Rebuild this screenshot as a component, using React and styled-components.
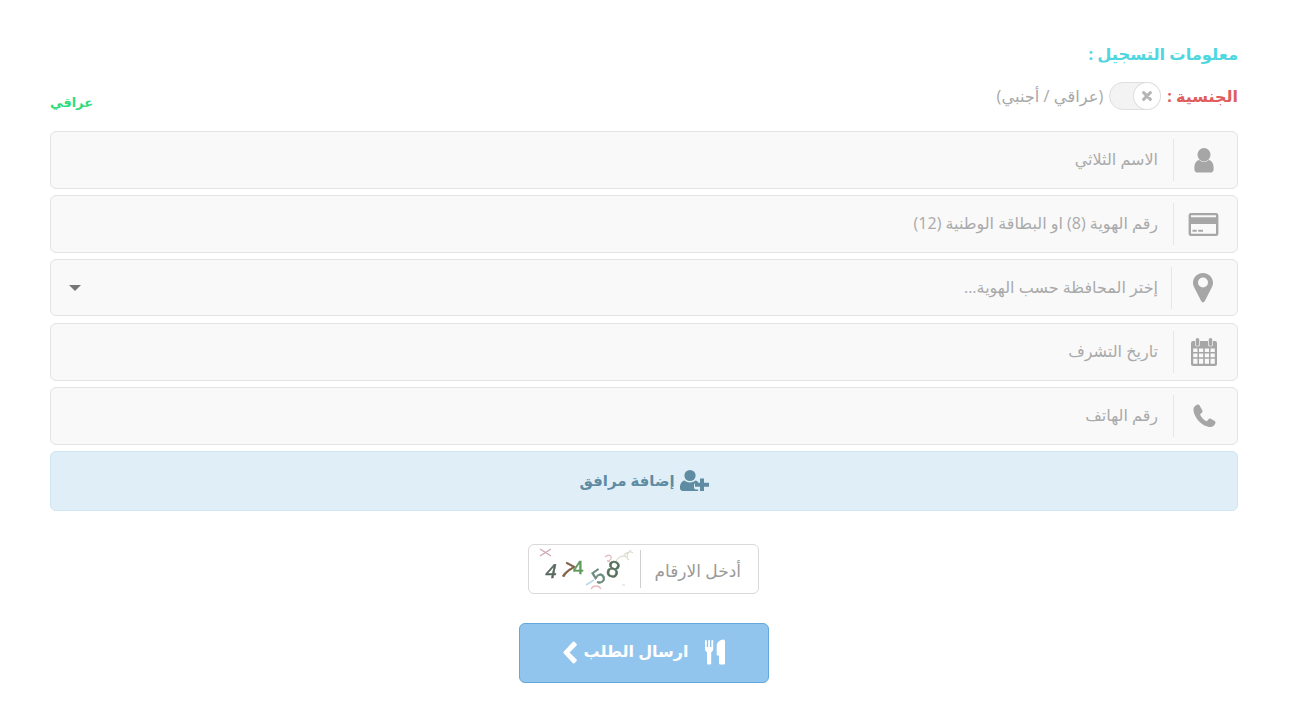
import React from 'react';
import styled, { createGlobalStyle } from 'styled-components';

const GlobalStyle = createGlobalStyle`
  html, body { margin: 0; padding: 0; background: #fff; }
  body { font-family: "Open Sans", "DejaVu Sans", "Noto Sans", sans-serif; }
`;

const Page = styled.div`
  direction: rtl;
  width: 1188px;
  margin-left: 50px;
  padding-top: 44px;
  padding-bottom: 32px;
`;

const Heading = styled.div`
  color: #4fd6de;
  font-size: 16.3px;
  font-weight: bold;
  line-height: 20px;
`;

const NationalityRow = styled.div`
  display: flex;
  align-items: center;
  justify-content: space-between;
  height: 28px;
  margin-top: 18px;
  margin-bottom: 21px;
`;

const NationalityLeft = styled.div`
  display: flex;
  align-items: center;
`;

const NationalityLabel = styled.span`
  color: #e05d5d;
  font-size: 16px;
  font-weight: bold;
  margin-left: 6px;
`;

const Toggle = styled.div`
  width: 52px;
  height: 28px;
  box-sizing: border-box;
  border: 1px solid #dfdfdf;
  border-radius: 14px;
  background: #f3f3f3;
  margin-left: 6px;
  display: flex;
`;

const Knob = styled.div`
  width: 26px;
  height: 26px;
  border-radius: 50%;
  background: #fff;
  box-shadow: 0 0 0 1px #dfdfdf;
  display: flex;
  align-items: center;
  justify-content: center;
`;

const Hint = styled.span`
  color: #a9a9a9;
  font-size: 16.3px;
`;

const Status = styled.span`
  color: #2fdc7c;
  font-size: 13px;
  font-weight: bold;
  position: relative;
  top: 6px;
`;

const Fields = styled.div`
  display: flex;
  flex-direction: column;
  gap: 6px;
`;

const Field = styled.div`
  display: flex;
  align-items: center;
  height: ${p => p.$h || 58}px;
  margin-bottom: ${p => (p.$h ? 1 : 0)}px;
  box-sizing: border-box;
  border: 1px solid #e3e3e3;
  border-radius: 6px;
  background: #f9f9f9;
`;

const IconCell = styled.div`
  width: ${p => p.$w || 64}px;
  height: 42px;
  flex: none;
  box-sizing: border-box;
  padding-right: 4px;
  border-left: 1px solid #e6e6e6;
  display: flex;
  align-items: center;
  justify-content: center;
  color: #a6a6a6;
`;

const Placeholder = styled.div`
  flex: 1;
  color: #aaa;
  font-size: 16px;
  padding-right: ${p => p.$pad || 15}px;
  margin-bottom: 2px;
`;

const Caret = styled.div`
  width: 0;
  height: 0;
  margin-left: 18px;
  border-left: 6px solid transparent;
  border-right: 6px solid transparent;
  border-top: 6px solid #777;
`;

const AddButton = styled.div`
  height: 60px;
  box-sizing: border-box;
  border: 1px solid #cfe5f2;
  border-radius: 6px;
  background: #e0eff7;
  color: #5f8ba3;
  font-size: 15px;
  font-weight: bold;
  display: flex;
  align-items: center;
  justify-content: center;
  gap: 5px;
`;

const AddLabel = styled.span`
  margin-bottom: 2px;
`;

const Captcha = styled.div`
  width: 231px;
  height: 50px;
  box-sizing: border-box;
  margin: 33px 479px 0 0;
  border: 1px solid #d9d9d9;
  border-radius: 6px;
  display: flex;
  align-items: center;
`;

const CaptchaLabel = styled.div`
  width: 118px;
  height: 38px;
  flex: none;
  box-sizing: border-box;
  border-left: 1px solid #cfcfcf;
  color: #999;
  font-size: 17px;
  display: flex;
  align-items: center;
  padding-right: 17px;
  padding-top: 2px;
`;

const Submit = styled.div`
  width: 250px;
  height: 60px;
  box-sizing: border-box;
  margin: 29px auto 0;
  padding-bottom: 2px;
  border: 1px solid #62a8dc;
  border-radius: 6px;
  background: #92c5ee;
  color: #fff;
  font-size: 16px;
  font-weight: bold;
  display: flex;
  align-items: center;
  justify-content: center;
  gap: 5px;
`;

const SubmitLabel = styled.span`
  margin-right: 11px;
  margin-bottom: 2px;
`;

const Svg = ({ w, h, vb, children }) => (
  <svg width={w} height={h} viewBox={vb} fill="currentColor" style={{ display: 'block' }}>{children}</svg>
);

const UserIcon = () => (
  <Svg w={22} h={25} vb="0 0 22 26">
    <ellipse cx="11" cy="7" rx="6.800" ry="7" />
    <path d="M1 20.500C1 15.500 3.500 12.800 6 12.500c1.400 1.300 3 2 5 2s3.600-.7 5-2c2.500.3 5 3 5 8v1.500c0 2.200-1.600 3.500-3.500 3.500h-13C2.600 25.500 1 24.200 1 22z" />
  </Svg>
);

const CardIcon = () => (
  <Svg w={31} h={25} vb="0 0 32 26">
    <path fillRule="evenodd" d="M3 1h26a2.500 2.500 0 0 1 2.500 2.500v19a2.500 2.500 0 0 1-2.500 2.500H3a2.500 2.500 0 0 1-2.500-2.500v-19A2.500 2.500 0 0 1 3 1zM3 3.400V5.500h26V3.400zM3 12.500v10h26v-10z" />
    <rect x="4.500" y="18.500" width="4.500" height="2" />
    <rect x="10.500" y="18.500" width="5" height="2" />
  </Svg>
);

const PinIcon = () => (
  <Svg w={20} h={30} vb="0 0 20 30">
    <path fillRule="evenodd" d="M10 0C4.500 0 0 4.300 0 9.800c0 2 .5 3.300 1.400 5L8 27.800c.4.800 1.100 1.600 2 1.600s1.600-.8 2-1.600l6.600-13c.9-1.700 1.400-3 1.400-5C20 4.300 15.500 0 10 0zm0 14.500a5 5 0 1 1 0-10 5 5 0 0 1 0 10z" />
  </Svg>
);

const CalendarIcon = () => (
  <Svg w={26} h={28} vb="0 0 26 28">
    <path fillRule="evenodd" d="M2 3h2v3a2.500 2.500 0 0 0 5 0V3h8v3a2.500 2.500 0 0 0 5 0V3h2a2 2 0 0 1 2 2v21a2 2 0 0 1-2 2H2a2 2 0 0 1-2-2V5a2 2 0 0 1 2-2zM2.200 10.500v3.500h4.300v-3.500zm5.800 0v3.500h4.200v-3.500zm5.800 0v3.500H18v-3.500zm5.700 0v3.500h4.300v-3.500zM2.200 15.500v3.800h4.300v-3.800zm5.800 0v3.800h4.200v-3.800zm5.800 0v3.800H18v-3.800zm5.700 0v3.800h4.300v-3.800zM2.200 20.800v5h4.300v-5zm5.800 0v5h4.200v-5zm5.800 0v5H18v-5zm5.700 0v5h4.300v-5z" />
    <path fillRule="evenodd" d="M6.500 0A1.800 1.800 0 0 1 8.300 1.800v4.400a1.800 1.800 0 0 1-3.600 0V1.800A1.800 1.800 0 0 1 6.500 0zm13 0a1.800 1.800 0 0 1 1.800 1.800v4.400a1.800 1.800 0 0 1-3.600 0V1.800A1.800 1.800 0 0 1 19.500 0z" />
  </Svg>
);

const PhoneIcon = () => (
  <Svg w={24} h={24} vb="0 0 24 24">
    <path d="M6 .5c-1 0-4.500 1.500-4.500 5C1.500 13.500 10.500 23 18.500 23c3 0 5-3 5-4.500 0-.6-.2-1-.8-1.400l-4-2.300c-.7-.4-1.400-.2-1.900.3l-1.500 1.700c-.4.400-.8.400-1.300.2-2.200-1.100-4.700-3.700-5.700-6-.2-.5-.1-.9.300-1.300l1.500-1.300c.5-.5.600-1.100.3-1.800L7.600 1.500C7.300.9 6.800.5 6 .5z" />
  </Svg>
);

const XIcon = () => (
  <svg width="10" height="10" viewBox="0 0 12 12" style={{ display: 'block' }}>
    <path d="M2 2l8 8M10 2l-8 8" stroke="#b5b5b5" strokeWidth="3.600" strokeLinecap="round" />
  </svg>
);

const UserPlusIcon = () => (
  <Svg w={29} h={22} vb="0 0 29 22">
    <ellipse cx="10" cy="5.500" rx="5.600" ry="5.500" />
    <path d="M0 17.500c0-4 2-6.500 4.500-7 1.400 1.200 3.300 2 5.500 2s4-.8 5.500-2c1 .2 2 .8 2.700 1.500v1h-2.200a2 2 0 0 0-2 2v2.500a2 2 0 0 0 2 2h2.200V21H3c-2 0-3-1.300-3-3z" />
    <path d="M20 8.500h4v4.200h4.500a.5.500 0 0 1 .5.500v3.100a.5.500 0 0 1-.5.500H24v4.200h-4v-4.200h-4.500a.5.500 0 0 1-.5-.5v-3.100a.5.500 0 0 1 .5-.5H20z" />
  </Svg>
);

const CutleryIcon = () => (
  <Svg w={20} h={26} vb="0 0 20 26">
    <path d="M0 1.500C0 .7 1.800.7 1.800 1.500V8H3.200V1.500C3.200.7 5 .7 5 1.500V8H6.400V1.500C6.400.7 8.200.7 8.200 1.500V10c0 1.600-.9 2.800-2 3.300V24c0 1-.6 1.500-1.500 1.500H3.500C2.600 25.500 2 25 2 24V13.300C.9 12.800 0 11.600 0 10z" />
    <path d="M20 1.500V24c0 1-.7 1.500-1.500 1.500h-3c-.9 0-1.500-.6-1.500-1.500v-7.500h-1.500c-.5 0-.8-.3-.8-.8V7c0-3.500 3-6.500 7-6.500.5 0 .8.400.8 1z" />
  </Svg>
);

const ChevronIcon = () => (
  <Svg w={15} h={23} vb="0 0 16 24">
    <path d="M14.500 4.500 7 12l7.500 7.500c.5.500.5 1.100 0 1.600l-2.300 2.300c-.5.500-1.100.5-1.600 0L.7 12.800c-.5-.5-.5-1.100 0-1.600L10.600.6c.5-.5 1.100-.5 1.600 0l2.300 2.300c.5.500.5 1.100 0 1.600z" />
  </Svg>
);

const CaptchaPic = styled.svg`
  display: block;
  direction: ltr;
  filter: blur(0.35px);
  flex: none;
  font-family: "Liberation Sans", sans-serif;
  text { stroke-width: 0.5px; }
`;

// the code picture: skewed digits with a few noise marks
const CaptchaImage = () => (
  <CaptchaPic width="106" height="44" viewBox="0 0 106 44">
    <path d="M6 2l11 7M17 2L6 9" stroke="#cfa9b4" strokeWidth="1.400" fill="none" />
    <path d="M52 38l8-5" stroke="#bcd8ea" strokeWidth="1.600" fill="none" />
    <path d="M71 10c3-3 7-2 6 2-1 2-3 2-4 2 3 0 4 2 3 4" stroke="#e3c1c6" strokeWidth="1.300" fill="none" />
    <path d="M82 14c3-5 8-6 10-4M90 8c3-3 7-4 9-2M95 13c-3-2-3-6 2-10" stroke="#dedfd2" strokeWidth="1.300" fill="none" />
    <path d="M57 42c2-4 8-4 10 0" stroke="#e9bcc2" strokeWidth="1.300" fill="none" />
    <path d="M88 38h3" stroke="#d8d8d8" strokeWidth="1" fill="none" />
    <text x="11" y="31" fontSize="20" fill="#56685c" stroke="#56685c" transform="skewX(-12) translate(6 0)">4</text>
    <text x="28" y="31" fontSize="21" fill="#7f5f45" stroke="#7f5f45" transform="rotate(28 34 23)">7</text>
    <text x="39" y="27" fontSize="19" fill="#5f9a5a" stroke="#5f9a5a">4</text>
    <text x="59" y="36" fontSize="20" fill="#6d8a7e" stroke="#6d8a7e" transform="rotate(-35 65 29)">5</text>
    <text x="73" y="30" fontSize="23" fill="#56705c" stroke="#56705c" transform="rotate(16 79 22)">8</text>
  </CaptchaPic>
);

const fields = [
  { icon: <UserIcon />, text: 'الاسم الثلاثي' },
  { icon: <CardIcon />, text: 'رقم الهوية (8) او البطاقة الوطنية (12)' },
  { icon: <PinIcon />, text: 'إختر المحافظة حسب الهوية...', select: true, h: 57, w: 66, pad: 13 },
  { icon: <CalendarIcon />, text: 'تاريخ التشرف' },
  { icon: <PhoneIcon />, text: 'رقم الهاتف' },
];

export default function App() {
  return (
    <Page>
      <GlobalStyle />
      <Heading>معلومات التسجيل :</Heading>
      <NationalityRow>
        <NationalityLeft>
          <NationalityLabel>الجنسية :</NationalityLabel>
          <Toggle>
            <Knob><XIcon /></Knob>
          </Toggle>
          <Hint>(عراقي / أجنبي)</Hint>
        </NationalityLeft>
        <Status>عراقي</Status>
      </NationalityRow>
      <Fields>
        {fields.map(f => (
          <Field key={f.text} $h={f.h}>
            <IconCell $w={f.w}>{f.icon}</IconCell>
            <Placeholder $pad={f.pad}>{f.text}</Placeholder>
            {f.select && <Caret />}
          </Field>
        ))}
        <AddButton>
          <UserPlusIcon />
          <AddLabel>إضافة مرافق</AddLabel>
        </AddButton>
      </Fields>
      <Captcha>
        <CaptchaLabel>أدخل الارقام</CaptchaLabel>
        <CaptchaImage />
      </Captcha>
      <Submit>
        <CutleryIcon />
        <SubmitLabel>ارسال الطلب</SubmitLabel>
        <ChevronIcon />
      </Submit>
    </Page>
  );
}
